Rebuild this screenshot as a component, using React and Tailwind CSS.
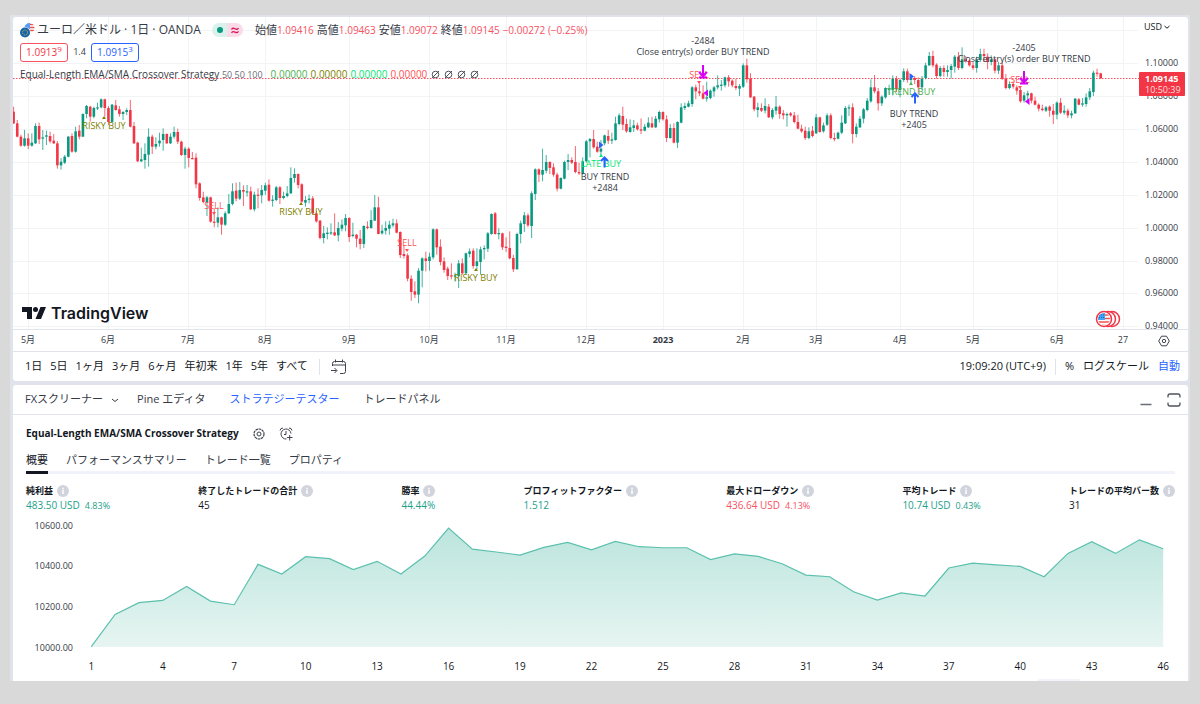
import React from 'react';

// each candle is [open, high, low, close], measured down from the top in thirds of a pixel
const candles = [
  [335,320,372,370],[370,360,412,410],[410,404,440,437],[437,390,440,415],[415,400,447,437],[437,400,440,428],
  [430,370,432,378],[378,368,432,418],[415,390,450,412],[410,392,435,406],[408,395,430,424],[422,402,432,430],
  [430,423,506,496],[496,474,509,485],[488,465,492,470],[470,408,472,410],[408,400,458,455],[455,380,458,394],
  [392,375,418,410],[410,340,411,342],[342,315,355,318],[320,318,365,350],[350,320,355,324],[324,308,330,322],
  [322,295,325,298],[298,296,350,324],[324,318,375,366],[366,312,368,314],[316,300,332,330],[328,318,350,342],
  [342,333,360,336],[336,325,345,330],[330,300,382,380],[378,366,432,430],[428,425,486,484],[484,443,486,478],
  [480,430,506,462],[464,385,500,410],[410,404,462,440],[440,412,448,432],[430,398,440,422],[420,385,452,402],
  [402,400,432,430],[430,400,432,410],[410,380,416,396],[396,386,432,425],[425,422,468,465],[465,440,506,446],
  [446,442,502,474],[474,456,478,477],[473,460,565,553],[550,547,602,594],[592,575,610,606],[608,588,648,592],
  [592,590,668,665],[665,625,682,668],[668,622,682,652],[652,650,704,674],[674,634,678,640],[640,582,642,612],
  [612,550,616,574],[572,548,604,596],[596,546,600,570],[570,556,618,575],[577,555,590,574],[574,560,630,628],
  [628,575,634,584],[584,565,625,587],[586,555,610,570],[572,548,585,556],[554,538,605,602],[602,586,620,599],
  [600,558,604,562],[562,558,612,594],[594,575,598,588],[588,558,592,580],[580,502,582,534],[534,505,548,522],
  [522,520,565,555],[553,550,608,605],[608,588,620,600],[600,584,610,596],[595,588,645,640],[640,632,668,664],
  [662,660,718,714],[714,678,730,700],[702,682,718,698],[700,670,705,697],[697,640,708,706],[706,666,724,684],
  [686,658,694,674],[676,642,694,654],[654,652,726,711],[708,668,712,704],[704,702,742,716],[716,690,748,732],
  [732,676,744,678],[680,664,688,684],[684,630,686,660],[662,585,662,622],[622,590,703,702],[700,674,704,692],
  [692,664,704,684],[686,662,704,674],[676,656,682,670],[670,658,700,698],[696,694,774,765],[762,735,776,768],
  [766,760,844,836],[836,826,902,876],[874,844,894,884],[884,804,910,812],[812,772,862,775],[775,755,814,783],
  [783,758,812,770],[772,685,778,688],[688,686,764,742],[740,718,796,786],[784,772,818,810],[806,800,840,828],
  [826,790,838,829],[829,818,845,826],[828,780,864,790],[790,775,824,820],[820,758,822,760],[762,745,772,754],
  [752,745,806,798],[798,745,808,784],[786,740,824,748],[748,736,778,744],[746,696,756,700],[702,640,704,642],
  [640,636,704,702],[702,685,718,699],[700,698,750,742],[740,712,756,744],[744,694,778,775],[774,764,816,808],
  [808,698,808,702],[702,662,730,670],[672,636,696,646],[646,640,682,676],[678,574,714,580],[582,505,600,508],
  [508,505,546,524],[524,446,544,510],[512,465,520,486],[486,484,522,504],[502,490,530,524],[524,518,574,566],
  [566,532,568,534],[536,482,538,486],[486,462,510,480],[480,472,492,488],[486,438,520,516],[516,488,525,520],
  [520,472,524,484],[484,420,488,424],[424,414,472,417],[417,390,446,442],[440,425,458,455],[455,420,465,446],
  [430,404,436,406],[408,390,432,422],[422,398,432,418],[420,350,422,370],[372,340,376,346],[348,320,390,374],
  [372,356,398,394],[396,358,398,382],[384,360,396,376],[376,368,392,388],[388,355,402,392],[392,372,394,380],
  [382,352,384,368],[370,350,384,382],[382,348,384,356],[358,332,368,336],[336,334,362,358],[358,346,426,414],
  [414,372,416,384],[384,370,430,428],[428,364,444,366],[368,310,370,322],[324,308,330,318],[320,302,322,310],
  [312,258,320,262],[262,254,298,274],[274,250,288,280],[280,256,298,296],[296,245,305,292],[294,268,298,272],
  [274,258,290,262],[262,226,268,256],[257,240,272,254],[256,230,262,232],[232,225,260,244],[242,238,262,256],
  [258,236,270,264],[266,252,288,258],[260,190,264,196],[196,176,248,238],[236,220,294,292],[290,288,334,328],
  [330,308,352,322],[324,310,336,332],[332,295,340,318],[320,312,354,352],[352,324,358,330],[332,288,344,320],
  [320,316,356,342],[340,330,358,346],[346,338,380,342],[340,336,350,346],[346,336,370,366],[366,344,388,386],
  [386,374,398,394],[392,380,420,414],[414,382,418,394],[392,378,412,408],[400,342,402,352],[352,350,398,396],
  [394,368,398,376],[374,340,378,346],[346,340,418,414],[414,398,424,417],[416,395,418,398],[398,346,402,368],
  [370,318,372,324],[325,314,348,322],[322,310,430,402],[402,370,412,380],[382,348,384,356],[356,324,370,328],
  [330,294,334,302],[304,238,308,262],[262,225,280,274],[274,264,332,310],[310,286,318,290],[292,262,296,264],
  [269,254,284,266],[270,226,286,236],[236,228,276,268],[270,236,292,240],[240,205,246,214],[214,206,248,240],
  [240,222,250,234],[234,228,252,240],[240,232,282,262],[262,228,270,236],[234,188,238,196],[196,156,198,168],
  [168,152,202,196],[194,190,236,228],[228,198,232,204],[204,196,230,216],[216,196,230,210],[210,192,236,198],
  [200,165,218,170],[170,156,210,204],[204,142,208,178],[178,168,188,184],[182,178,200,196],[196,185,210,204],
  [204,170,218,180],[180,146,186,162],[162,146,186,168],[170,160,208,186],[186,166,196,178],[178,174,220,212],
  [212,186,222,196],[196,184,240,236],[236,222,268,264],[264,244,268,252],[252,244,266,260],[262,256,284,272],
  [270,262,308,304],[302,276,308,286],[286,272,304,280],[280,278,310,302],[302,290,316,314],[314,310,334,326],
  [326,314,334,330],[332,318,336,322],[320,316,350,332],[332,312,372,344],[344,304,358,308],[308,294,342,338],
  [338,316,344,332],[332,326,354,346],[346,332,355,340],[340,294,342,296],[298,294,316,314],[314,294,320,310],
  [312,280,320,292],[292,264,300,274],[276,212,288,218],[218,206,230,221],[220,218,236,235],
];

const prices = [
  ['1.10000', 46], ['1.08000', 79], ['1.06000', 112], ['1.04000', 145], ['1.02000', 178],
  ['1.00000', 211], ['0.98000', 244], ['0.96000', 276], ['0.94000', 309],
];

const months = [
  ['5月', 15], ['6月', 95], ['7月', 175], ['8月', 252], ['9月', 336], ['10月', 416], ['11月', 493], ['12月', 573],
  ['2023', 650], ['2月', 730], ['3月', 803], ['4月', 887], ['5月', 960], ['6月', 1044], ['27', 1110],
];

// indicator labels with their small marker above or below
const signals = [
  { text: 'RISKY BUY', x: 91, y: 108, mark: 101, color: '#808000', up: true },
  { text: 'SELL', x: 201, y: 188, mark: 196, color: '#ff5252' },
  { text: 'RISKY BUY', x: 288, y: 194, mark: 187, color: '#808000', up: true },
  { text: 'SELL', x: 394, y: 225, mark: 233, color: '#ff5252' },
  { text: 'RISKY BUY', x: 463, y: 260, mark: 253, color: '#808000', up: true },
  { text: 'LATE BUY', x: 588, y: 146, mark: 139, color: '#00e676', up: true },
  { text: 'SELL', x: 686, y: 57, mark: 65, color: '#ff5252' },
  { text: 'TREND BUY', x: 898, y: 74, mark: 67, color: '#4caf50', up: true },
  { text: 'SELL', x: 1007, y: 62, mark: 70, color: '#ff5252' },
];

const orders = [
  { lines: ['BUY TREND', '+2484'], x: 592, y: 159 },
  { lines: ['-2484', 'Close entry(s) order BUY TREND'], x: 690, y: 23 },
  { lines: ['BUY TREND', '+2405'], x: 901, y: 96 },
  { lines: ['-2405', 'Close entry(s) order BUY TREND'], x: 1011, y: 30 },
];

const equity = [
  10000, 10159, 10217, 10228, 10297, 10225, 10207, 10406, 10358, 10444, 10434, 10380, 10421, 10358, 10447, 10585,
  10481, 10467, 10452, 10490, 10514, 10478, 10519, 10493, 10488, 10488, 10430, 10458, 10445, 10409, 10353, 10345,
  10271, 10230, 10265, 10250, 10388, 10412, 10403, 10396, 10345, 10460, 10518, 10460, 10527, 10483,
];

const stats = [
  { label: '純利益', value: '483.50 USD', pct: '4.83%', color: 'text-[#22a08a]' },
  { label: '終了したトレードの合計', value: '45', color: 'text-[#131722]' },
  { label: '勝率', value: '44.44%', color: 'text-[#22a08a]' },
  { label: 'プロフィットファクター', value: '1.512', color: 'text-[#22a08a]' },
  { label: '最大ドローダウン', value: '436.64 USD', pct: '4.13%', color: 'text-[#f7525f]' },
  { label: '平均トレード', value: '10.74 USD', pct: '0.43%', color: 'text-[#22a08a]' },
  { label: 'トレードの平均バー数', value: '31', color: 'text-[#131722]' },
];

const ohlc = [['始値', '1.09416'], ['高値', '1.09463'], ['安値', '1.09072'], ['終値', '1.09145']];

function Candles() {
  return (
    <g>
      {candles.map(([o, h, l, c], i) => {
        const x = 0.6 + i * 3.648;
        const color = c < o ? '#089981' : '#f23645';
        return (
          <g key={i} fill={color}>
            <rect x={x - 0.5} y={h / 3 - 17} width="1" height={(l - h) / 3} opacity="0.75" />
            <rect x={x - 1.3} y={Math.min(o, c) / 3 - 17} width="2.6" height={Math.max(1.2, Math.abs(o - c) / 3)} />
          </g>
        );
      })}
    </g>
  );
}

function PriceChart() {
  return (
    <svg viewBox="0 0 1175 335" className="block w-full h-auto" role="img" aria-label="EURUSD">
      <g stroke="#f2f3f5">
        {months.map(([, x], i) => <line key={i} x1={x + 0.5} x2={x + 0.5} y1="0" y2="312" />)}
        <line x1="0" x2="1125" y1="13.5" y2="13.5" />
        {prices.map(([p, y]) => <line key={p} x1="0" x2="1125" y1={y + 0.5} y2={y + 0.5} />)}
      </g>
      <line x1="0" x2="1126" y1="61.5" y2="61.5" stroke="#f7525f" strokeDasharray="1.5 1.5" />
      <Candles />

      {signals.map((s, i) => (
        <g key={i} fill={s.color}>
          <text x={s.x} y={s.y} textAnchor="middle" dominantBaseline="central" className="text-[9px]">{s.text}</text>
          <path d={s.up ? `M${s.x - 2} ${s.mark + 1}h4l-2 -3z` : `M${s.x - 2} ${s.mark - 1}h4l-2 3z`} />
        </g>
      ))}
      {orders.map((o, i) => (
        <g key={i} fill="#363a45">
          {o.lines.map((line, n) => (
            <text key={n} x={o.x} y={o.y + n * 11} textAnchor="middle" dominantBaseline="central" className="text-[9px]">{line}</text>
          ))}
        </g>
      ))}

      <g stroke="#2962ff" strokeWidth="2" fill="none">
        <path d="M591.5 150.5v-10M588 144l3.5-3.5 3.5 3.5" />
        <path d="M902 86.5v-10M898.5 80l3.5-3.5 3.5 3.5" />
      </g>
      <path d="M586 124.5v7l4.5-3.5zM896.5 56v7l4.5-3.5z" fill="#2962ff" />
      <g stroke="#d500f9" strokeWidth="2" fill="none">
        <path d="M690 48v10M686 55l4 4 4-4M686 60.5h8" />
        <path d="M1011 54v10M1007 61l4 4 4-4M1007 66.5h8" />
      </g>
      <path d="M695 72.5v7l-4.5-3.5zM1016.5 81v7l-4.5-3.5z" fill="#d500f9" />

      {/* economic events */}
      <g>
        <circle cx="1099" cy="302" r="7.5" fill="#fff" stroke="#f23645" strokeWidth="1.5" />
        <circle cx="1095" cy="302" r="7.5" fill="#fff" stroke="#f23645" strokeWidth="1.5" />
        <circle cx="1091" cy="302" r="7.5" fill="#fff" stroke="#f23645" strokeWidth="1.5" />
        <clipPath id="flag"><circle cx="1091" cy="302" r="6" /></clipPath>
        <g clipPath="url(#flag)">
          <path d="M1084 298h14M1084 301.5h14M1084 305h14M1084 308.5h14" stroke="#ef5350" strokeWidth="1.6" />
          <rect x="1084" y="295" width="8" height="8" fill="#42a5f5" />
          <path d="M1086 298h6M1086 300.5h6" stroke="#1565c0" strokeDasharray="1 1" />
        </g>
      </g>

      {/* price scale */}
      <g fill="#363a45">
        {prices.map(([p, y]) => (
          <text key={p} x="1132" y={y - 1} dominantBaseline="central" className="text-[9px]">{p}</text>
        ))}
      </g>
      <rect x="1126" y="55" width="46" height="24" rx="1" fill="#f23645" />
      <text x="1132" y="61" fill="#fff" dominantBaseline="central" className="text-[9px] font-bold">1.09145</text>
      <text x="1132" y="72" fill="#fdd" dominantBaseline="central" className="text-[9px]">10:50:39</text>

      {/* time scale */}
      <path d="M0 312.5h1175M0 334.5h1175" stroke="#e0e3eb" />
      <g fill="#363a45">
        {months.map(([m, x], i) => (
          <text key={i} x={x} y="322" textAnchor="middle" dominantBaseline="central" className={m === '2023' ? 'text-[9px] font-bold' : 'text-[9px]'}>{m}</text>
        ))}
      </g>
    </svg>
  );
}

function Legend() {
  return (
    <div className="absolute left-[7px] top-[5px] text-[10px] text-[#363a45] whitespace-nowrap">
      <div className="flex h-4 items-center">
        <svg width="15" height="15" viewBox="0 0 15 15">
          <clipPath id="us"><circle cx="9.5" cy="5" r="5" /></clipPath>
          <g clipPath="url(#us)">
            <rect x="4" width="11" height="10" fill="#fff" />
            <path d="M9 1.5h6M9 4.5h6M9 7.5h6" stroke="#ef5350" strokeWidth="1.6" />
            <rect x="4" width="6" height="6" fill="#5b9cf6" />
          </g>
          <circle cx="5" cy="9.5" r="5.5" fill="#fff" />
          <circle cx="5" cy="9.5" r="5" fill="#1565a8" />
          <circle cx="5" cy="9.5" r="2.5" fill="none" stroke="#d9b84a" strokeDasharray="1 1" />
        </svg>
        <h1 className="ml-[2px] text-[12px]">ユーロ／米ドル · 1日 · OANDA</h1>
        <div className="ml-[11px] flex h-[14px] w-[31px]">
          <span className="flex flex-1 items-center justify-center rounded-l-full bg-[#daf1ec]">
            <span className="h-[6px] w-[6px] rounded-full bg-[#089981]"></span>
          </span>
          <span className="flex flex-1 items-center justify-center rounded-r-full bg-[#fadbe7]">
            <svg width="8" height="7" viewBox="0 0 8 7" fill="none" stroke="#d81b60" strokeWidth="1.3">
              <path d="M.5 2.500C1.500 1 2.700 1 4 1.800s2.500.7 3.500-.8M.5 5.800c1-1.500 2.200-1.500 3.500-.7s2.500.7 3.500-.8" />
            </svg>
          </span>
        </div>
        <div className="ml-3 flex items-center gap-[3px]">
          {ohlc.map(([k, v]) => (
            <span key={k} className="flex items-center">
              <span className="text-[11px]">{k}</span>
              <span className="text-[#f7525f]">{v}</span>
            </span>
          ))}
          <span className="text-[#f7525f]">−0.00272 (−0.25%)</span>
        </div>
      </div>
      <div className="mt-1 flex h-5 items-center">
        <button className="h-[19px] w-12 rounded-[3px] border border-[#f7525f] bg-white text-[#f23645]">1.0913<sup className="text-[8px]">9</sup></button>
        <span className="w-[23px] text-center text-[9px]">1.4</span>
        <button className="h-[19px] w-12 rounded-[3px] border border-[#2962ff] bg-white text-[#2962ff]">1.0915<sup className="text-[8px]">3</sup></button>
      </div>
      <div className="mt-1 flex h-4 items-center">
        <span>Equal-Length EMA/SMA Crossover Strategy <span className="text-[9px] text-[#6a6d78]">50 50 100</span></span>
        <div className="ml-2 flex gap-[3px]">
          <span className="text-[#4caf50]">0.00000</span>
          <span className="text-[#808000]">0.00000</span>
          <span className="text-[#00e676]">0.00000</span>
          <span className="text-[#ff5252]">0.00000</span>
        </div>
        <div className="ml-1 flex gap-[4px]">
          {[0, 1, 2, 3].map((n) => (
            <svg key={n} width="9" height="9" viewBox="0 0 9 9" fill="none" stroke="#50535e">
              <circle cx="4.5" cy="4.5" r="3.3" />
              <path d="M1 8l7-7" />
            </svg>
          ))}
        </div>
      </div>
    </div>
  );
}

function HexGear({ size }) {
  return (
    <svg width={size} height={size} viewBox="0 0 12 12" fill="none" stroke="#40434e">
      <path d="M3.5 1.2h5L11.3 6l-2.800 4.800h-5L.7 6z" strokeLinejoin="round" />
      <circle cx="6" cy="6" r="1.7" />
    </svg>
  );
}

function TradingViewLogo() {
  return (
    <div className="absolute left-[9px] bottom-[29px] flex items-center text-[#131722]">
      <svg width="24" height="12" viewBox="0 0 24 12" fill="currentColor">
        <path d="M0 0h10v12H5V5H0z" />
        <circle cx="13.5" cy="2.5" r="2.5" />
        <path d="M18.5 0H24l-5 12h-5.500z" />
      </svg>
      <span className="ml-[5px] font-['Inter',sans-serif] text-[16px] leading-[20px] font-semibold">TradingView</span>
    </div>
  );
}

function RangeToolbar() {
  const ranges = ['1日', '5日', '1ヶ月', '3ヶ月', '6ヶ月', '年初来', '1年', '5年', 'すべて'];
  return (
    <div className="flex h-[29px] items-center justify-between pl-3 pr-2 text-[11px] text-[#131722]">
      <div className="flex items-center gap-2">
        {ranges.map((r) => <button key={r}>{r}</button>)}
        <span className="mx-[3px] h-4 w-px bg-[#e0e3eb]"></span>
        <button aria-label="日付へ移動">
          <svg width="16" height="16" viewBox="0 0 16 16" fill="none" stroke="#40434e">
            <path d="M1.5 7V4.500a2 2 0 0 1 2-2h9a2 2 0 0 1 2 2v8a2 2 0 0 1-2 2H9M1.500 6h13M4.500 .5v3M11.500 .5v3M0 11.500h5.500M3.500 9l2.500 2.500L3.500 14" />
          </svg>
        </button>
      </div>
      <div className="flex items-center gap-[9px]">
        <button>19:09:20 (UTC+9)</button>
        <span className="h-4 w-px bg-[#e0e3eb]"></span>
        <button>%</button>
        <button>ログスケール</button>
        <button className="text-[#2962ff]">自動</button>
      </div>
    </div>
  );
}

function EquityChart() {
  const px = (i) => 78.3 + i * 23.82;
  const py = (v) => 132.7 - (v - 10000) * 0.2028;
  const points = equity.map((v, i) => `${px(i)},${py(v)}`).join(' ');

  return (
    <svg viewBox="0 0 1175 167" className="block w-full h-auto" role="img" aria-label="資産曲線">
      <defs>
        <linearGradient id="equity" x1="0" x2="0" y1="0" y2="1">
          <stop offset="0" stopColor="#bbe5dd" />
          <stop offset="1" stopColor="#e7f5f2" />
        </linearGradient>
      </defs>
      <polygon points={`${px(0)},133 ${points} ${px(45)},133`} fill="url(#equity)" />
      <polyline points={points} fill="none" stroke="#5bc0ae" strokeWidth="1.2" />
      <g fill="#363a45" className="text-[9px]">
        {[10600, 10400, 10200, 10000].map((v) => (
          <text key={v} x="60" y={133 - (v - 10000) * 0.203} textAnchor="end" dominantBaseline="central">{v}.00</text>
        ))}
      </g>
      <g fill="#131722" className="text-[10px]">
        {equity.map((v, i) => i % 3 === 0 && (
          <text key={i} x={px(i)} y="152" textAnchor="middle" dominantBaseline="central">{i + 1}</text>
        ))}
      </g>
      <rect x="1024" y="165" width="44" height="6" rx="3" fill="#f0f3fa" />
    </svg>
  );
}

function InfoIcon() {
  return (
    <svg width="12" height="12" viewBox="0 0 12 12">
      <circle cx="6" cy="6" r="6" fill="#d1d4dc" />
      <path d="M6 5v4M6 2.800v1.400" stroke="#fff" strokeWidth="1.5" />
    </svg>
  );
}

function StrategyTester() {
  const tabs = ['パフォーマンスサマリー', 'トレード一覧', 'プロパティ'];
  return (
    <section className="overflow-hidden rounded-t-[3px] bg-white text-[#363a45]">
      <div className="flex h-[30px] items-center justify-between border-b border-[#e0e3eb] pl-3 pr-[7px] text-[11px]">
        <div className="flex items-center">
          <button className="flex items-center gap-2">
            FXスクリーナー
            <svg width="8" height="8" viewBox="0 0 8 8" fill="none" stroke="currentColor"><path d="M1 3l3 2.500L7 3" /></svg>
          </button>
          <button className="ml-[18px]">Pine エディタ</button>
          <button className="ml-6 text-[#2962ff]">ストラテジーテスター</button>
          <button className="ml-6">トレードパネル</button>
        </div>
        <div className="flex items-center gap-[15px]">
          <button aria-label="最小化">
            <svg width="12" height="14" viewBox="0 0 12 14"><path d="M.5 11.500h11" stroke="#6a6d78" strokeWidth="1.5" /></svg>
          </button>
          <button aria-label="最大化">
            <svg width="14" height="14" viewBox="0 0 14 14" fill="none" stroke="#50535e" strokeWidth="1.3">
              <path d="M1 4.500V3a2 2 0 0 1 2-2h8a2 2 0 0 1 2 2v1.500M1 9.500V11a2 2 0 0 0 2 2h8a2 2 0 0 0 2-2V9.500" />
            </svg>
          </button>
        </div>
      </div>

      <div className="px-[13px]">
        <div className="flex h-[37px] items-center">
          <h2 className="text-[10px] font-bold text-[#131722]">Equal-Length EMA/SMA Crossover Strategy</h2>
          <button className="ml-[14px]" aria-label="設定">
            <svg width="12" height="12" viewBox="0 0 12 12" fill="none" stroke="#40434e">
              <circle cx="6" cy="6" r="5" strokeDasharray="2.6 .6" strokeWidth="1.2" />
              <circle cx="6" cy="6" r="2" />
            </svg>
          </button>
          <button className="ml-[14px]" aria-label="アラートを追加">
            <svg width="14" height="14" viewBox="0 0 14 14" fill="none" stroke="#40434e">
              <path d="M12 6.500A5 5 0 1 0 7.500 12M7 4v3.500h-2M1 3.500A3 3 0 0 1 4 1M10 1a3 3 0 0 1 3 2.500M8 10.500h5.500M10.700 8v5.500" />
            </svg>
          </button>
        </div>
        <nav className="flex h-[22px] gap-[18px] border-b-[3px] border-[#f0f3fa] text-[11px]">
          <button className="-mb-[3px] border-b-[3px] border-[#131722] pb-[6px] text-[#131722]">概要</button>
          {tabs.map((t) => <button key={t} className="-mb-[3px] pb-[9px]">{t}</button>)}
        </nav>
        <dl className="flex h-[40px] justify-between pt-[9px]">
          {stats.map((s) => (
            <div key={s.label}>
              <dt className="flex h-[15px] items-center gap-1 text-[9px] font-bold text-[#131722]">
                {s.label}
                <InfoIcon />
              </dt>
              <dd className={`text-[10px] leading-[15px] ${s.color}`}>
                {s.value}
                {s.pct && <span className="ml-[5px] text-[9px]">{s.pct}</span>}
              </dd>
            </div>
          ))}
        </dl>
      </div>
      <EquityChart />
    </section>
  );
}

function App() {
  return (
    <div className="min-h-screen bg-[#d9d9d9] pt-[15px] pr-[10px] pb-[23px] pl-[10px] font-['Open_Sans','Noto_Sans_CJK_JP',sans-serif]" lang="ja">
      <main className="flex flex-col gap-1 bg-[#e0e3eb] pt-[2px] pr-[2px] pl-[3px]">
        <section className="overflow-hidden rounded-[3px] bg-white">
          <div className="relative">
            <PriceChart />
            <Legend />
            <button className="absolute top-[3px] right-[18px] flex items-center gap-[2px] text-[9px] text-[#131722]">
              USD
              <svg width="6" height="6" viewBox="0 0 6 6" fill="none" stroke="currentColor"><path d="M.5 2L3 4.200 5.500 2" /></svg>
            </button>
            <button className="absolute right-[18px] bottom-[5px]" aria-label="設定"><HexGear size={12} /></button>
            <TradingViewLogo />
          </div>
          <RangeToolbar />
        </section>
        <StrategyTester />
      </main>
    </div>
  );
}

export default App;
